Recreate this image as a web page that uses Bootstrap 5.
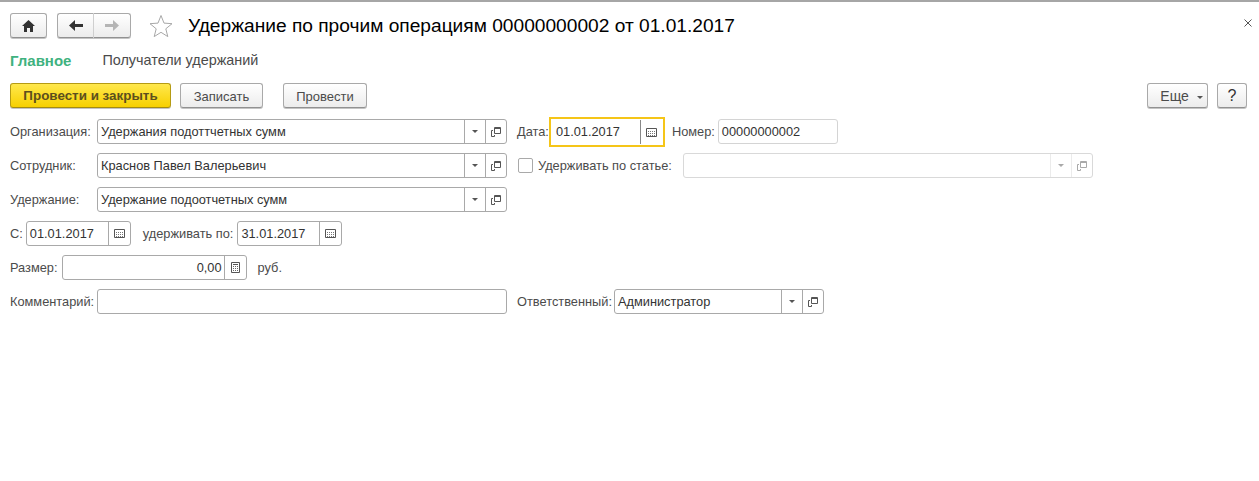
<!DOCTYPE html>
<html lang="ru">
<head>
  <meta charset="UTF-8">
  <title>Удержание по прочим операциям</title>
  <link href="https://cdn.jsdelivr.net/npm/bootstrap@5.3.3/dist/css/bootstrap.min.css" rel="stylesheet">
  <style>
    body {
      font-family: "Liberation Sans", Arial, sans-serif;
      font-size: 12.8px;
      color: #4b4b4b;
      background: #fff;
      border-top: 2px solid #a6a6a6;
      height: 481px;
      overflow: hidden;
    }
    .tool-btn {
      height: 25px;
      border: 1px solid #a9a9a9;
      border-bottom-color: #919191;
      border-radius: 3px;
      background: linear-gradient(#fff, #ececec);
      box-shadow: 0 1px 0 #c4c4c4;
      color: #4b4b4b;
      font-size: 13px;
      padding: 0;
    }
    .head-row { padding: 11px 0 0 10px; height: 45px; }
    .nav-seg { width: 37px; }
    .hist-group { width: 74px; margin-left: 10px; display: flex; }
    .hist-group .tool-btn { width: 37px; }
    .hist-group .tool-btn:first-child { border-right: 1px solid #cfcfcf; border-radius: 3px 0 0 3px; }
    .hist-group .tool-btn:last-child { border-left: 0; border-radius: 0 3px 3px 0; }
    .star-ico { margin: 1px 15px 0 18px; }
    .doc-title { font-size: 19.16px; color: #000; line-height: 26px; margin: 0; font-weight: 400; }
    .close-x { position: absolute; top: 17px; right: 7px; }
    .tab-row { padding-left: 10px; height: 27px; font-size: 14.4px; line-height: 27px; color: #4b4b4b; }
    .tab-active { color: #3fb27f; font-weight: 700; font-size: 15px; margin-right: 31px; }
    .cmd-row { padding: 9px 12px 0 10px; height: 45px; }
    .cmd-row .tool-btn { padding-top: 2px; }
    .post-btn {
      width: 161px;
      background: linear-gradient(#ffe84d, #f7d000);
      border-color: #b59b14;
      border-bottom-color: #a58c10;
      color: #5c4f1e;
      font-weight: 700;
    }
    .cmd-row .post-btn { font-size: 13.4px; }
    .save-btn { width: 83px; margin-left: 9px; }
    .run-btn { width: 84px; margin-left: 20px; }
    .cmd-row .more-btn { width: 61px; margin-left: auto; font-size: 14px; padding-left: 8px; }
    .help-btn { width: 30px; margin-left: 9px; color: #333; }
    .cmd-row .help-btn { font-size: 16px; padding-top: 0; }
    .form-zone { padding-left: 10px; }
    .form-line { height: 25px; margin-bottom: 9px; }
    .field-label { white-space: nowrap; line-height: 25px; }
    .lbl-wide { width: 87px; }
    .fld {
      height: 25px;
      border: 1px solid #a9a9a9;
      border-radius: 3px;
      background: #fff;
      color: #333;
      display: flex;
      align-items: stretch;
      line-height: 23px;
    }
    .fld-text { flex: 1; padding: 0 3px; white-space: nowrap; overflow: hidden; }
    .fld-cell { width: 21px; border-left: 1px solid #a9a9a9; display: flex; align-items: center; justify-content: center; }
    .fld-cell.pick { width: 22px; }
    .fld-main { width: 410px; }
    .right-part { margin-left: 10px; }
    .date-focus { width: 116px; height: 30px; margin-top: -2px; border: 2px solid #f5c518; border-radius: 0; line-height: 26px; }
    .date-focus .fld-text { padding-left: 5px; }
    .date-focus .fld-cell { width: 23px; margin: 1px 0; border-left-color: #888; }
    .num-label { margin-left: 7px; margin-right: 3px; }
    .num-fld { width: 120px; border-color: #d4d4d4; }
    .chk-box { width: 15px; height: 15px; border: 1px solid #a9a9a9; border-radius: 2px; margin: 5px 5px 0 1px; }
    .fld-off { width: 410px; margin-left: 11px; border-color: #d9d9d9; }
    .fld-off .fld-cell { border-left-color: #d9d9d9; }
    .from-fld { width: 105px; margin-left: 3px; }
    .to-label { margin-left: 12px; margin-right: 4px; }
    .size-fld { width: 185px; margin-left: 4px; }
    .size-fld .fld-text { text-align: right; padding-right: 2px; }
    .rub-label { margin-left: 11px; }
    .resp-fld { width: 210px; margin-left: 2px; }
  </style>
</head>
<body>
  <svg width="0" height="0" class="d-block">
    <defs>
      <symbol id="ico-drop" viewBox="0 0 6 3"><path d="M0 0h6L3 3z" fill="#555"/></symbol>
      <symbol id="ico-open" viewBox="0 0 10 10">
        <path d="M3.5.5h6v6h-6z" fill="none" stroke="#555"/>
        <path d="M3 1.500h6" stroke="#555"/>
        <path d="M2 3.500H.5v6h3V8" fill="none" stroke="#555"/>
      </symbol>
      <symbol id="ico-cal" viewBox="0 0 11 9">
        <path d="M.5.5h10v8H.5z" fill="#fff" stroke="#555"/>
        <path d="M2 3.500h7M2 5.500h7M2 7.500h7" stroke="#777" stroke-dasharray="1 1"/>
      </symbol>
      <symbol id="ico-calc" viewBox="0 0 9 11">
        <path d="M.5.5h8v10h-8z" fill="#fff" stroke="#555"/>
        <path d="M2 2.500h5" stroke="#555"/>
        <path d="M2 4.500h5M2 6.500h5M2 8.500h5" stroke="#666" stroke-dasharray="1 1"/>
      </symbol>
    </defs>
  </svg>

  <div class="head-row d-flex align-items-start position-relative">
    <button class="tool-btn nav-seg d-flex align-items-center justify-content-center">
      <svg width="13" height="12" viewBox="0 0 13 12"><path d="M6.500 0L0 6h2v6h3V8h3v4h3V6h2z" fill="#333"/></svg>
    </button>
    <div class="hist-group">
      <button class="tool-btn d-flex align-items-center justify-content-center">
        <svg width="14" height="11" viewBox="0 0 14 11"><path d="M6 0L0 5.500 6 11V7h8V4H6z" fill="#333"/></svg>
      </button>
      <button class="tool-btn d-flex align-items-center justify-content-center">
        <svg width="14" height="11" viewBox="0 0 14 11"><path d="M8 0l6 5.500L8 11V7H0V4h8z" fill="#b5b5b5"/></svg>
      </button>
    </div>
    <svg class="star-ico" width="24" height="23" viewBox="0 0 24 23"><path d="M12 1.500l3 7.600 8 .6-6.200 5.100 2 7.800L12 18.300l-6.800 4.300 2-7.800L1 9.700l8-.6z" fill="none" stroke="#a8a8a8"/></svg>
    <h1 class="doc-title">Удержание по прочим операциям 00000000002 от 01.01.2017</h1>
    <svg class="close-x" width="8" height="8" viewBox="0 0 8 8"><path d="M.5.500l7 7M7.500.5l-7 7" stroke="#555"/></svg>
  </div>

  <div class="tab-row d-flex">
    <span class="tab-active">Главное</span>
    <span>Получатели удержаний</span>
  </div>

  <div class="cmd-row d-flex">
    <button class="tool-btn post-btn">Провести и закрыть</button>
    <button class="tool-btn save-btn">Записать</button>
    <button class="tool-btn run-btn">Провести</button>
    <button class="tool-btn more-btn">Еще <svg width="6" height="3" class="ms-1 align-middle"><use href="#ico-drop"/></svg></button>
    <button class="tool-btn help-btn">?</button>
  </div>

  <div class="form-zone">
    <div class="form-line d-flex">
      <span class="field-label lbl-wide">Организация:</span>
      <div class="fld fld-main">
        <span class="fld-text">Удержания подоттчетных сумм</span>
        <span class="fld-cell"><svg width="6" height="3"><use href="#ico-drop"/></svg></span>
        <span class="fld-cell"><svg width="10" height="10"><use href="#ico-open"/></svg></span>
      </div>
      <div class="right-part d-flex">
        <span class="field-label">Дата:</span>
        <div class="fld date-focus">
          <span class="fld-text">01.01.2017</span>
          <span class="fld-cell"><svg width="11" height="9"><use href="#ico-cal"/></svg></span>
        </div>
        <span class="field-label num-label">Номер:</span>
        <div class="fld num-fld"><span class="fld-text">00000000002</span></div>
      </div>
    </div>

    <div class="form-line d-flex">
      <span class="field-label lbl-wide">Сотрудник:</span>
      <div class="fld fld-main">
        <span class="fld-text">Краснов Павел Валерьевич</span>
        <span class="fld-cell"><svg width="6" height="3"><use href="#ico-drop"/></svg></span>
        <span class="fld-cell"><svg width="10" height="10"><use href="#ico-open"/></svg></span>
      </div>
      <div class="right-part d-flex">
        <span class="chk-box"></span>
        <span class="field-label">Удерживать по статье:</span>
        <div class="fld fld-off">
          <span class="fld-text"></span>
          <span class="fld-cell opacity-50"><svg width="6" height="3"><use href="#ico-drop"/></svg></span>
          <span class="fld-cell opacity-50"><svg width="10" height="10"><use href="#ico-open"/></svg></span>
        </div>
      </div>
    </div>

    <div class="form-line d-flex">
      <span class="field-label lbl-wide">Удержание:</span>
      <div class="fld fld-main">
        <span class="fld-text">Удержание подоотчетных сумм</span>
        <span class="fld-cell"><svg width="6" height="3"><use href="#ico-drop"/></svg></span>
        <span class="fld-cell"><svg width="10" height="10"><use href="#ico-open"/></svg></span>
      </div>
    </div>

    <div class="form-line d-flex">
      <span class="field-label">С:</span>
      <div class="fld from-fld">
        <span class="fld-text">01.01.2017</span>
        <span class="fld-cell pick"><svg width="11" height="9"><use href="#ico-cal"/></svg></span>
      </div>
      <span class="field-label to-label">удерживать по:</span>
      <div class="fld from-fld ms-0">
        <span class="fld-text">31.01.2017</span>
        <span class="fld-cell pick"><svg width="11" height="9"><use href="#ico-cal"/></svg></span>
      </div>
    </div>

    <div class="form-line d-flex">
      <span class="field-label">Размер:</span>
      <div class="fld size-fld">
        <span class="fld-text">0,00</span>
        <span class="fld-cell pick"><svg width="9" height="11"><use href="#ico-calc"/></svg></span>
      </div>
      <span class="field-label rub-label">руб.</span>
    </div>

    <div class="form-line d-flex">
      <span class="field-label lbl-wide">Комментарий:</span>
      <div class="fld fld-main"><span class="fld-text"></span></div>
      <div class="right-part d-flex">
        <span class="field-label">Ответственный:</span>
        <div class="fld resp-fld">
          <span class="fld-text">Администратор</span>
          <span class="fld-cell"><svg width="6" height="3"><use href="#ico-drop"/></svg></span>
          <span class="fld-cell"><svg width="10" height="10"><use href="#ico-open"/></svg></span>
        </div>
      </div>
    </div>
  </div>
  <script src="https://cdn.jsdelivr.net/npm/bootstrap@5.3.3/dist/js/bootstrap.bundle.min.js"></script>
</body>
</html>
